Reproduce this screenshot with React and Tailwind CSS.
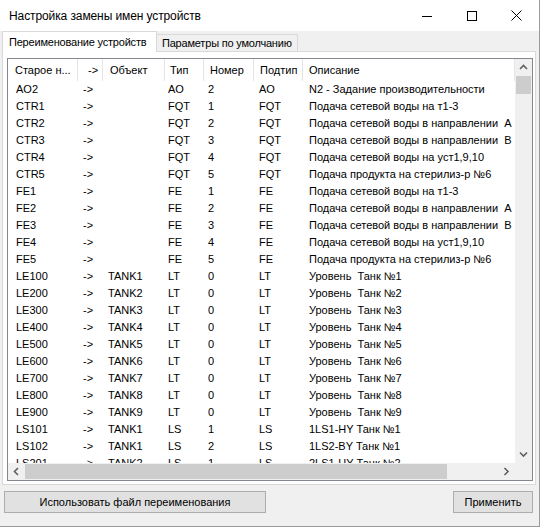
import React from 'react';

const rows = [
  ['AO2', '->', '', 'AO', '2', 'AO', 'N2 - Задание производительности'],
  ['CTR1', '->', '', 'FQT', '1', 'FQT', 'Подача сетевой воды на т1-3'],
  ['CTR2', '->', '', 'FQT', '2', 'FQT', 'Подача сетевой воды в направлении  A'],
  ['CTR3', '->', '', 'FQT', '3', 'FQT', 'Подача сетевой воды в направлении  B'],
  ['CTR4', '->', '', 'FQT', '4', 'FQT', 'Подача сетевой воды на уст1,9,10'],
  ['CTR5', '->', '', 'FQT', '5', 'FQT', 'Подача продукта на стерилиз-р №6'],
  ['FE1', '->', '', 'FE', '1', 'FE', 'Подача сетевой воды на т1-3'],
  ['FE2', '->', '', 'FE', '2', 'FE', 'Подача сетевой воды в направлении  A'],
  ['FE3', '->', '', 'FE', '3', 'FE', 'Подача сетевой воды в направлении  B'],
  ['FE4', '->', '', 'FE', '4', 'FE', 'Подача сетевой воды на уст1,9,10'],
  ['FE5', '->', '', 'FE', '5', 'FE', 'Подача продукта на стерилиз-р №6'],
  ['LE100', '->', 'TANK1', 'LT', '0', 'LT', 'Уровень  Танк №1'],
  ['LE200', '->', 'TANK2', 'LT', '0', 'LT', 'Уровень  Танк №2'],
  ['LE300', '->', 'TANK3', 'LT', '0', 'LT', 'Уровень  Танк №3'],
  ['LE400', '->', 'TANK4', 'LT', '0', 'LT', 'Уровень  Танк №4'],
  ['LE500', '->', 'TANK5', 'LT', '0', 'LT', 'Уровень  Танк №5'],
  ['LE600', '->', 'TANK6', 'LT', '0', 'LT', 'Уровень  Танк №6'],
  ['LE700', '->', 'TANK7', 'LT', '0', 'LT', 'Уровень  Танк №7'],
  ['LE800', '->', 'TANK8', 'LT', '0', 'LT', 'Уровень  Танк №8'],
  ['LE900', '->', 'TANK9', 'LT', '0', 'LT', 'Уровень  Танк №9'],
  ['LS101', '->', 'TANK1', 'LS', '1', 'LS', '1LS1-HY Танк №1'],
  ['LS102', '->', 'TANK1', 'LS', '2', 'LS', '1LS2-BY Танк №1'],
  ['LS201', '->', 'TANK2', 'LS', '1', 'LS', '2LS1-HY Танк №2'],
];

// ширина колонки + отступ текста (шапка / строки)
const cols = [
  { title: 'Старое н...', w: 'w-[70px]', h: 'pl-[7px]', d: 'pl-[8px]' },
  { title: '->', w: 'w-[25px]', h: 'pl-[10px]', d: 'pl-[5px]' },
  { title: 'Объект', w: 'w-[62px]', h: 'pl-[7px]', d: 'pl-[5px]' },
  { title: 'Тип', w: 'w-[39px]', h: 'pl-[5px]', d: 'pl-[3px]' },
  { title: 'Номер', w: 'w-[50px]', h: 'pl-[6px]', d: 'pl-[4px]' },
  { title: 'Подтип', w: 'w-[49px]', h: 'pl-[6px]', d: 'pl-[5px]' },
  { title: 'Описание', w: 'flex-1', h: 'pl-[6px]', d: 'pl-[6px]' },
];

const Chevron = ({ dir }) => {
  const d = {
    up: 'M1 5 L4.5 1.5 L8 5',
    down: 'M1 1.5 L4.5 5 L8 1.5',
    left: 'M5 1 L1.5 4.5 L5 8',
    right: 'M1.5 1 L5 4.5 L1.5 8',
  }[dir];
  const vert = dir === 'up' || dir === 'down';
  return (
    <svg width={vert ? 9 : 7} height={vert ? 7 : 9} viewBox={vert ? '0 0 9 7' : '0 0 7 9'}>
      <path d={d} fill="none" stroke="#606060" strokeWidth="1.6" />
    </svg>
  );
};

export default function App() {
  return (
    <div className="w-[542px] h-[528px] bg-white" style={{ fontFamily: '"Liberation Sans", Arial, sans-serif' }}>
      <div className="w-[540px] h-[527px] bg-[#f0f0f0] border-r border-b border-[#9a9a9a] flex flex-col text-black">
        {/* заголовок окна */}
        <div className="h-[31px] bg-white flex items-center shrink-0">
          <span className="pl-[9px] text-[12px] tracking-[-0.1px] flex-1">Настройка замены имен устройств</span>
          <div className="w-[45px] h-full flex items-center justify-center">
            <svg width="10" height="10" viewBox="0 0 10 10"><path d="M0 5.5 H10" stroke="#000" strokeWidth="1" /></svg>
          </div>
          <div className="w-[45px] h-full flex items-center justify-center">
            <svg width="10" height="10" viewBox="0 0 10 10"><rect x="0.5" y="0.5" width="9" height="9" fill="none" stroke="#000" strokeWidth="1" /></svg>
          </div>
          <div className="w-[45px] h-full flex items-center justify-center">
            <svg width="11" height="11" viewBox="0 0 11 11"><path d="M0.5 0.5 L10.5 10.5 M10.5 0.5 L0.5 10.5" stroke="#000" strokeWidth="1" /></svg>
          </div>
        </div>

        {/* вкладки */}
        <div className="h-[20px] flex items-start pl-[2px] text-[11px] tracking-[-0.2px] whitespace-nowrap shrink-0">
          <div className="relative z-10 h-[21px] w-[155px] bg-white border border-b-0 border-[#d9d9d9] pl-[6px] flex items-center">
            Переименование устройств
          </div>
          <div className="mt-[3px] h-[17px] w-[141px] bg-[#f0f0f0] border border-l-0 border-b-0 border-[#d9d9d9] pl-[5px] flex items-center">
            Параметры по умолчанию
          </div>
        </div>

        {/* панель вкладки */}
        <div className="ml-[2px] w-[534px] h-[434px] bg-white border border-[#d9d9d9] pt-[6px] pl-[4px] pr-[2px] shrink-0">
          <div className="h-[423px] border border-[#828790] flex flex-col text-[11px]">
            <div className="flex flex-1 min-h-0">
              <div className="flex-1 min-w-0 flex flex-col overflow-hidden">
                <div className="h-[22px] flex shrink-0">
                  {cols.map((c, i) => (
                    <div key={i} className={`${c.w} ${c.h} h-full flex items-center border-r border-[#e5e5e5] whitespace-nowrap overflow-hidden`}>
                      {c.title}
                    </div>
                  ))}
                </div>
                <div className="flex-1 overflow-hidden">
                  {rows.map((r, ri) => (
                    <div key={ri} className="h-[17px] flex items-center">
                      {cols.map((c, i) => (
                        <div key={i} className={`${c.w} ${c.d} whitespace-pre overflow-hidden`}>
                          {r[i]}
                        </div>
                      ))}
                    </div>
                  ))}
                </div>
              </div>
              {/* вертикальная прокрутка */}
              <div className="w-[17px] bg-[#f0f0f0] flex flex-col shrink-0">
                <div className="h-[17px] flex items-center justify-center"><Chevron dir="up" /></div>
                <div className="h-[18px] mx-[1px] bg-[#cdcdcd]" />
                <div className="flex-1" />
                <div className="h-[17px] flex items-center justify-center"><Chevron dir="down" /></div>
              </div>
            </div>
            {/* горизонтальная прокрутка */}
            <div className="h-[17px] flex shrink-0">
              <div className="flex-1 bg-[#f0f0f0] flex items-center">
                <div className="w-[17px] h-full flex items-center justify-center"><Chevron dir="left" /></div>
                <div className="w-[422px] h-[15px] bg-[#cdcdcd]" />
                <div className="flex-1" />
                <div className="w-[17px] h-full flex items-center justify-center"><Chevron dir="right" /></div>
              </div>
              <div className="w-[17px] bg-[#f0f0f0]" />
            </div>
          </div>
        </div>

        {/* кнопки */}
        <div className="mt-[6px] flex items-start px-[4px] text-[11px]">
          <button className="w-[262px] h-[22px] bg-[#e1e1e1] border border-[#adadad] flex items-center justify-center">
            Использовать файл переименования
          </button>
          <div className="flex-1" />
          <button className="w-[80px] mr-[2px] h-[22px] bg-[#e1e1e1] border border-[#adadad] flex items-center justify-center">
            Применить
          </button>
        </div>
      </div>
    </div>
  );
}
